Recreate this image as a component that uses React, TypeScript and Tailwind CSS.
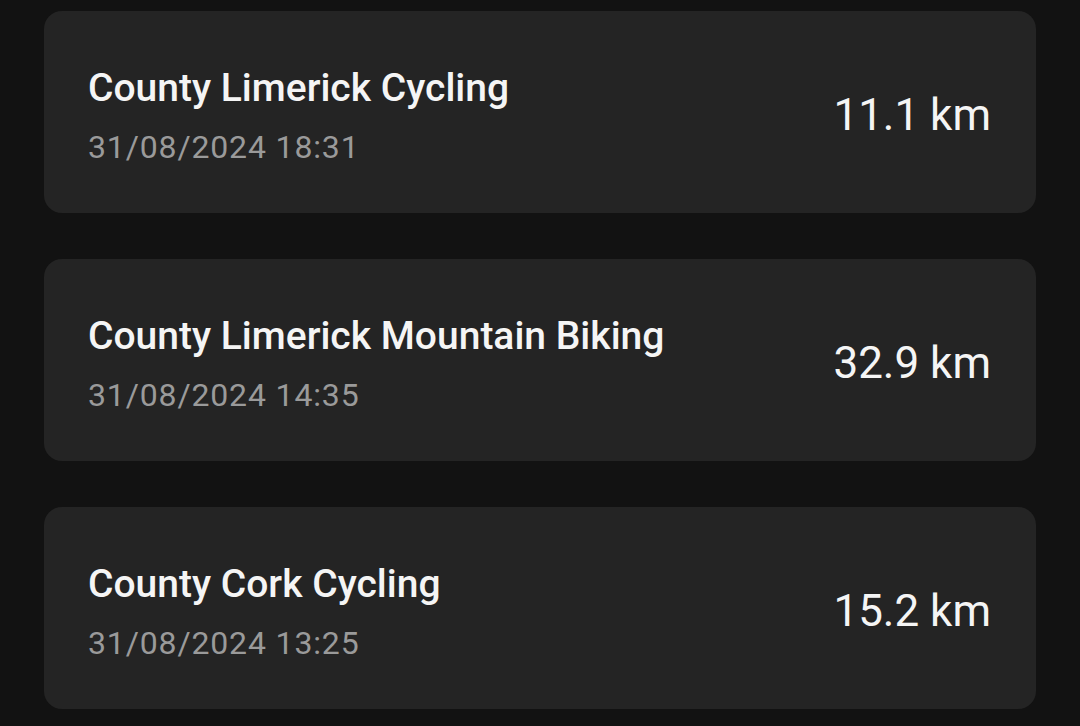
import React from "react";

const items = [
  { title: "County Limerick Cycling", date: "31/08/2024 18:31", dist: "11.1 km" },
  { title: "County Limerick Mountain Biking", date: "31/08/2024 14:35", dist: "32.9 km" },
  { title: "County Cork Cycling", date: "31/08/2024 13:25", dist: "15.2 km" },
];

export default function App() {
  return (
    <div
      className="w-[1080px] h-[726px] bg-[#121212] overflow-hidden px-[44px] pt-[11px] flex flex-col gap-[46px]"
      style={{ fontFamily: "Roboto, 'Noto Sans', sans-serif" }}
    >
      {items.map((it) => (
        <div
          key={it.title}
          className="h-[202px] shrink-0 rounded-[18px] bg-[#242424] pl-[44px] pr-[45px] flex items-center justify-between"
        >
          <div className="flex flex-col pt-[6px]">
            <div className="text-[39px] leading-[46px] font-medium text-[#f5f5f5]">{it.title}</div>
            <div className="mt-[17px] text-[32px] leading-[38px] tracking-[0.85px] text-[#9a9a9a]">{it.date}</div>
          </div>
          <div className="pt-[6px] text-[44px] leading-[52px] text-[#f5f5f5]">{it.dist}</div>
        </div>
      ))}
    </div>
  );
}
